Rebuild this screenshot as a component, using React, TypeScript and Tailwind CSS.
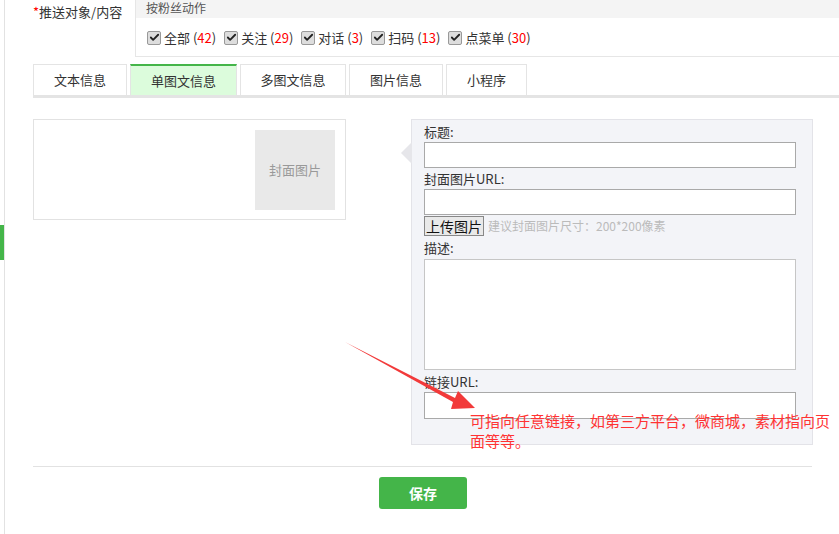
import { Check } from 'lucide-react';

const font = { fontFamily: '"Noto Sans CJK SC", "Liberation Sans", sans-serif' };

const actions = [
  { name: '全部', n: 42 },
  { name: '关注', n: 29 },
  { name: '对话', n: 3 },
  { name: '扫码', n: 13 },
  { name: '点菜单', n: 30 },
];

const tabs = [
  { name: '文本信息', w: 'w-[94px]' },
  { name: '单图文信息', w: 'w-[107px]', active: true },
  { name: '多图文信息', w: 'w-[106px]' },
  { name: '图片信息', w: 'w-[94px]' },
  { name: '小程序', w: 'w-[81px]' },
];

export default function App() {
  return (
    <div className="relative w-[839px] h-[534px] bg-white overflow-hidden text-[13px] text-[#333]" style={font}>
      {/* left rail */}
      <div className="absolute left-[4px] top-0 h-full w-px bg-[#e2e2e2]" />
      <div className="absolute left-0 top-[225px] h-[35px] w-[4px] bg-[#44b549]" />

      <div className="pl-[33px]">
        {/* push target */}
        <div className="flex">
          <div className="w-[102px] pt-[2px]">
            <span className="text-[#f00]">*</span>推送对象/内容
          </div>
          <div className="flex-1 border-l border-b border-[#e6e6e6] h-[57px]">
            <div className="bg-[#f4f4f4] h-[18px] leading-[16px] pl-[10px] text-[12px] text-[#555]">按粉丝动作</div>
            <div className="flex items-center gap-[8px] pl-[11px] pt-[10px]">
              {actions.map((a) => (
                <label key={a.name} className="flex items-center gap-[3px] text-[13px]">
                  <span className="w-[14px] h-[14px] rounded-[2px] border border-[#999] bg-[#ddd] flex items-center justify-center">
                    <Check className="w-[11px] h-[11px] text-[#222]" strokeWidth={4} />
                  </span>
                  <span>
                    {a.name + ' ('}
                    <span className="text-[#f00]">{a.n}</span>)
                  </span>
                </label>
              ))}
            </div>
          </div>
        </div>

        {/* tabs */}
        <div className="mt-[7px] flex gap-[3px] border-b-[3px] border-[#e4e4e4] h-[34px]">
          {tabs.map((t) => (
            <div
              key={t.name}
              className={`${t.w} h-[31px] flex items-center justify-center border-x ${
                t.active ? 'bg-[#dcfcdc] border-t-2 border-t-[#44b549] border-x-[#e4e4e4]' : 'border-t border-[#e4e4e4]'
              }`}
            >
              {t.name}
            </div>
          ))}
        </div>

        {/* editor */}
        <div className="flex mt-[21px]">
          <div className="w-[313px] h-[101px] border border-[#e2e2e2] flex justify-end items-start pt-[10px] pr-[10px]">
            <div className="w-[80px] h-[80px] bg-[#e9e9e9] flex items-center justify-center text-[#999]">封面图片</div>
          </div>
          <div className="relative ml-[65px] w-[402px] h-[326px] bg-[#f3f4f8] border border-[#e3e3e8] px-[12px] pt-[2px]">
            <div className="absolute -left-[11px] top-[22px] w-0 h-0 border-y-[11px] border-y-transparent border-r-[11px] border-r-[#e6e6ea]" />
            <div className="leading-[20px]">标题:</div>
            <div className="h-[26px] w-[372px] bg-white border border-[#a9a9a9]" />
            <div className="leading-[20px] mt-[1px]">封面图片URL:</div>
            <div className="h-[26px] w-[372px] bg-white border border-[#a9a9a9]" />
            <div className="flex items-center gap-[4px] mt-[1px]">
              <button className="h-[20px] px-[1px] bg-[#e9e9e9] border border-[#888] text-[14px] leading-[18px] text-[#111]">上传图片</button>
              <span className="text-[#bbb] text-[12px]">建议封面图片尺寸：200*200像素</span>
            </div>
            <div className="leading-[20px] mt-[2px]">描述:</div>
            <div className="h-[111px] w-[372px] bg-white border border-[#c6c6c6] mt-[1px]" />
            <div className="leading-[20px] mt-[2px]">链接URL:</div>
            <div className="h-[27px] w-[372px] bg-white border border-[#a9a9a9]" />
          </div>
        </div>

        <div className="w-[779px] border-t border-[#e2e2e2] mt-[21px]" />
        <div className="pl-[346px] mt-[10px]">
          <button className="w-[88px] h-[32px] rounded-[3px] bg-[#44b549] text-white text-[14px] font-bold">保存</button>
        </div>
      </div>

      {/* annotation */}
      <svg className="absolute left-0 top-0" width="839" height="534">
        <polygon points="345,342 455,398 458,391 475,408 451,409 453,402" fill="#f23a3a" />
      </svg>
      <div className="absolute left-[470px] top-[411px] w-[362px] text-[15px] leading-[20px] text-[#f33]">
        可指向任意链接，如第三方平台，微商城，素材指向页面等等。
      </div>
    </div>
  );
}
